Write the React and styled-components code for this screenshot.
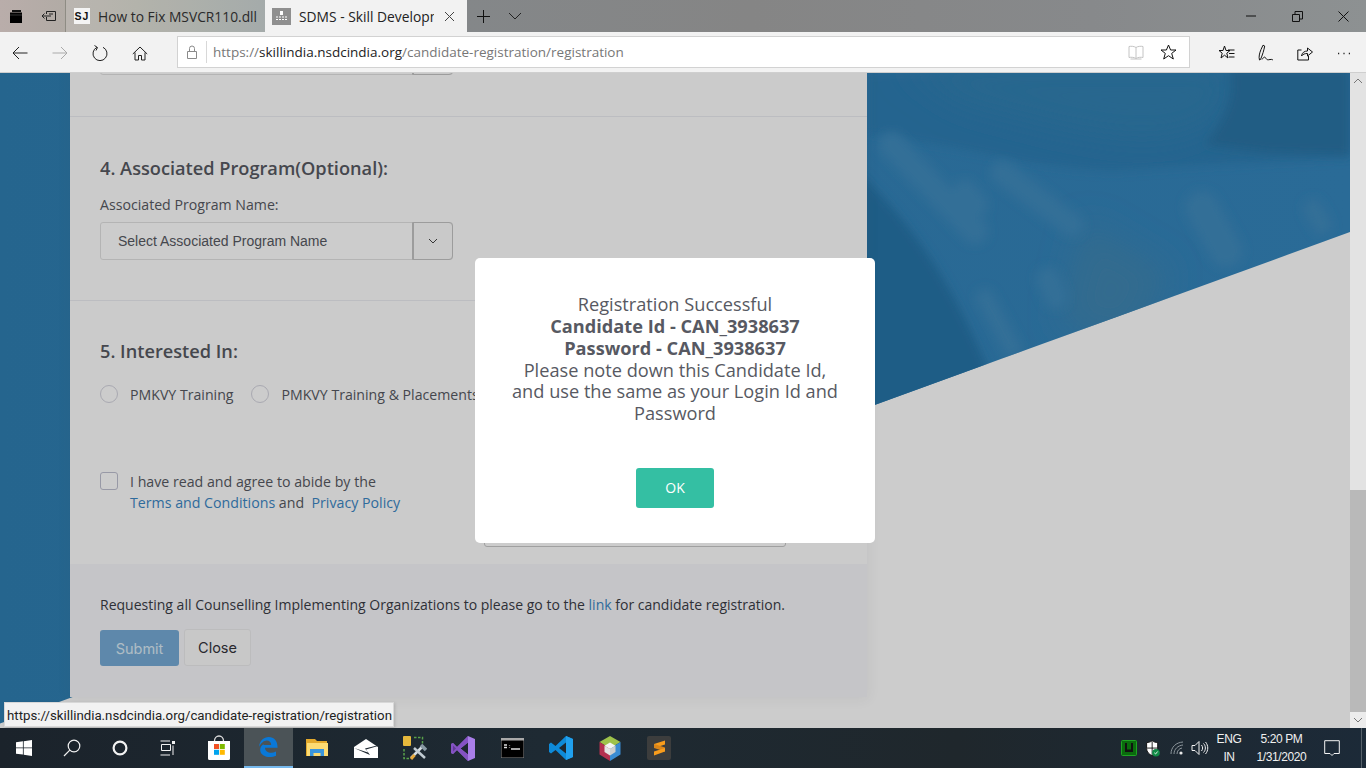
import React from 'react';
import styled, { createGlobalStyle } from 'styled-components';

const Global = createGlobalStyle`
  html, body { margin: 0; padding: 0; height: 100%; overflow: hidden; }
  #root { height: 100%; }
  * { box-sizing: border-box; }
`;

const Shell = styled.div`
  width: 1366px; height: 768px; display: flex; flex-direction: column;
  font-family: "Open Sans", "Noto Sans", sans-serif; overflow: hidden; position: relative;
`;

/* ---- tab strip ---- */
const TabStrip = styled.div`
  height: 32px; flex: none; display: flex; align-items: stretch;
  background: linear-gradient(90deg, #b9adaa 0%, #a9a9a0 10%, #979f9f 20%, #848789 34%, #858585 55%, #87898b 80%, #8d9192 100%);
`;
const StripIcon = styled.div`
  width: ${p => p.$w}px; flex: none; display: flex; align-items: center; justify-content: center;
`;
const Tab = styled.div`
  width: ${p => p.$w}px; flex: none; display: flex; align-items: center; padding-left: 8px;
  background: ${p => p.$active ? '#f2f2f2' : 'rgba(255,255,255,.12)'};
  border-left: ${p => p.$active ? 'none' : '1px solid #8e8c84'};
  color: ${p => p.$active ? '#222' : '#2a2a2a'};
  position: relative;
`;
const TabTitle = styled.span`
  font-size: 13.8px; white-space: nowrap; overflow: hidden; width: ${p => p.$w}px; margin-left: ${p => p.$ml}px;
  font-family: "Open Sans", sans-serif;
`;
const FaviconSJ = styled.span`
  width: 16px; height: 16px; background: #f4f4f4; color: #111; font: 700 10.5px/16px "Liberation Sans", sans-serif;
  text-align: center; letter-spacing: 1px; flex: none;
`;
const FaviconGrey = styled.span`
  width: 19px; height: 17px; margin-left: -1px; background: #8f8f8f; flex: none; display: flex; align-items: center; justify-content: center;
`;
const TabClose = styled.span`
  display: flex; margin-left: 10px;
`;
const StripActions = styled.div`
  display: flex; align-items: center; gap: 17px; padding-left: 9px; flex: 1;
`;
const WindowButtons = styled.div`
  margin-left: auto; display: flex; align-items: center;
`;
const WindowButton = styled.span`
  width: 46px; height: 32px; display: flex; align-items: center; justify-content: center;
`;

/* ---- toolbar ---- */
const Toolbar = styled.div`
  height: 41px; flex: none; background: #f2f2f2; border-bottom: 1px solid #cfcfcf; display: flex; align-items: center;
`;
const NavSlot = styled.span`
  width: 40px; flex: none; display: flex; align-items: center; justify-content: center;
`;
const NavGroup = styled.div`
  display: flex; width: 177px; padding-top: 2px;
`;
const AddressBar = styled.div`
  width: 1013px; height: 32px; background: #fff; border: 1px solid #d2d2d2; display: flex; align-items: center; flex: none; padding-right: 4px;
`;
const Lock = styled.span`
  width: 29px; flex: none; display: flex; justify-content: center; border-right: 1px solid #d8d8d8; height: 22px; align-items: center;
`;
const Url = styled.span`
  margin-left: 6px; font-size: 13.5px; color: #777; white-space: nowrap; flex: 1;
`;
const UrlHost = styled.span` color: #222; `;
const AddressIcon = styled.span`
  width: 33px; flex: none; display: flex; justify-content: center;
`;
const RightTools = styled.div`
  display: flex; padding-left: 17px; padding-top: 2px;
`;
const ToolSlot = styled.span`
  width: 39px; flex: none; display: flex; justify-content: center; align-items: center;
`;

/* ---- page ---- */
const Viewport = styled.div`
  flex: 1; display: flex; min-height: 0; position: relative;
`;
const PageArea = styled.div`
  width: 1350px; flex: none; position: relative; overflow: hidden; background: #fff;
`;
const Backdrop = styled.svg`
  position: absolute; left: 0; top: 0; width: 1350px; height: 655px;
`;
const Panel = styled.main`
  position: relative; margin-left: 70px; width: 797px; background: #fefefe; box-shadow: 0 1px 12px 1px rgba(69,65,78,.07);
`;
const SelectBox = styled.div`
  width: 353px; height: 38px; display: flex; border: 1px solid #e2e2e2; border-radius: 3px; background: #fff;
  margin-top: ${p => p.$mt || 0}px;
`;
const SelectText = styled.span`
  flex: 1; padding-left: 17px; font: 14px/37px "Liberation Sans", sans-serif; color: #575962;
`;
const SelectAddon = styled.span`
  width: 39px; border-left: 1px solid #c4c4c4; display: flex; align-items: center; justify-content: center;
  outline: 1px solid #c4c4c4; border-radius: 0 3px 3px 0; background: #fcfcfc;
`;
const Section = styled.section`
  padding: ${p => p.$pt}px 30px ${p => p.$pb}px;
  border-bottom: ${p => p.$rule ? '1px solid #ebedf2' : 'none'};
`;
const Heading = styled.h3`
  margin: 0; font-size: 18.2px; line-height: 24px; font-weight: 600; color: #575962;
`;
const FieldLabel = styled.div`
  margin: 15px 0 7px; font-size: 14.15px; line-height: 20px; color: #575962;
`;
const RadioRow = styled.div`
  display: flex; align-items: center; margin-top: 22px; height: 18px;
`;
const Radio = styled.span`
  width: 18px; height: 18px; border-radius: 50%; border: 1px solid #d4d4de; background: #fff; flex: none; margin-right: 12px;
`;
const RadioLabel = styled.span`
  font-size: 14.15px; color: #575962; margin-right: 18px; white-space: nowrap;
`;
const AgreeRow = styled.div`
  display: flex; align-items: flex-start;
`;
const AgreeLeft = styled.div`
  width: 384px; flex: none; display: flex; align-items: flex-start;
`;
const Check = styled.span`
  width: 18px; height: 18px; border-radius: 3px; border: 1px solid #bfc0d0; background: #fff; flex: none; margin-right: 12px;
`;
const AgreeText = styled.div`
  font-size: 14.2px; line-height: 21px; color: #575962; margin-top: -1px;
`;
const TermsLink = styled.a`
  color: #3b86c4; text-decoration: none;
`;
const HiddenField = styled.div`
  width: 302px; height: 37px; margin-top: 38px; border: 1px solid #c8c8c8; border-radius: 3px; background: #fff;
`;
const Footer = styled.footer`
  background: #f7f7fa; padding: 31px 30px 0; height: 133px;
`;
const FooterNote = styled.p`
  margin: 0; font-size: 14.02px; line-height: 20px; color: #3a3c46;
`;
const FooterLink = styled.a`
  color: #3b86c4; text-decoration: none;
`;
const FooterActions = styled.div`
  display: flex; gap: 5px; margin-top: 15px; align-items: flex-start;
`;
const SubmitBtn = styled.span`
  width: 79px; height: 36px; border-radius: 3px; background: #76abd6; color: #dcebf6; font: 400 14.5px/37px Inter, "Open Sans", sans-serif; text-align: center;
`;
const CloseBtn = styled.span`
  width: 67px; height: 37px; margin-top: -1px; border-radius: 3px; background: #fbfbfb; border: 1px solid #ebebed; color: #33333a; font: 400 14.5px/35px Inter, "Open Sans", sans-serif; text-align: center;
`;

/* ---- modal ---- */
const Overlay = styled.div`
  position: absolute; inset: 0; background: rgba(0,0,0,.2); display: flex; align-items: center; justify-content: center;
`;
const Dialog = styled.div`
  width: 400px; height: 285px; background: #fff; border-radius: 5px; padding: 36px 34px 0; text-align: center;
  color: #575962; font-size: 18.2px; line-height: 21.84px; display: flex; flex-direction: column; align-items: center;
`;
const DialogBody = styled.div`
  height: 131px;
`;
const OkButton = styled.span`
  margin-top: 43px; width: 78px; height: 40px; border-radius: 3px; background: #34bfa3; color: #fff; font-size: 14px; line-height: 40px;
`;

/* ---- tooltip ---- */
const Tooltip = styled.div`
  position: absolute; left: 4px; top: 629px; width: 390px; height: 25px; background: #f2f2f2; border: 1px solid #d8d8d8;
  font: 13.25px/25px Roboto, sans-serif; color: #222; padding-left: 2px; box-shadow: 1px 1px 3px rgba(0,0,0,.15); white-space: nowrap; overflow: hidden;
`;

/* ---- scrollbar ---- */
const ScrollBar = styled.div`
  width: 16px; flex: none; background: #e3e3e3; display: flex; flex-direction: column;
`;
const ScrollButton = styled.span`
  height: 16px; flex: none; background: ${p => p.$light ? '#ececec' : '#e3e3e3'}; display: flex; align-items: center; justify-content: center;
`;
const ScrollTrack = styled.span`
  height: 401px; flex: none;
`;
const ScrollThumb = styled.span`
  flex: 1; background: #b9b9b9;
`;

/* ---- taskbar ---- */
const Taskbar = styled.div`
  height: 40px; flex: none; display: flex; align-items: stretch; background: linear-gradient(90deg, #1b232b 0%, #1e2a33 40%, #1f272c 70%, #1c2a38 100%);
`;
const TaskSlot = styled.span`
  width: ${p => p.$w || 48.8}px; flex: none; display: flex; align-items: center; justify-content: center;
  ${p => p.$active ? 'background: #4b5357; border-bottom: 2px solid #76b9ed;' : ''}
`;
const Spacer = styled.span` width: 3px; flex: none; `;
const Tray = styled.div`
  margin-left: auto; display: flex; align-items: center; color: #fff;
`;
const TrayIcon = styled.span`
  width: ${p => p.$w}px; flex: none; display: flex; justify-content: center;
`;
const TrayText = styled.span`
  width: ${p => p.$w}px; flex: none; text-align: center; font: 12px/18px "Liberation Sans", sans-serif; letter-spacing: -.4px; color: #f0f0f0;
`;
const TrayEnd = styled.span`
  width: 5px; height: 40px; margin-left: 14px; border-left: 1px solid #56616a; flex: none;
`;

const Stroke = ({ w = 16, h = 16, vb, color = '#111', sw = 1, children }) => (
  <svg width={w} height={h} viewBox={vb || `0 0 ${w} ${h}`} fill="none" stroke={color} strokeWidth={sw}>{children}</svg>
);

function BlueBackdrop() {
  return (
    <Backdrop viewBox="0 0 1350 655" aria-hidden="true">
      <defs>
        <clipPath id="cut"><polygon points="0,0 1350,0 1350,159 0,650.5" /></clipPath>
        <filter id="soft" x="-40%" y="-40%" width="180%" height="180%"><feGaussianBlur stdDeviation="5" /></filter>
        <filter id="softer" x="-30%" y="-30%" width="160%" height="160%"><feGaussianBlur stdDeviation="16" /></filter>
        <linearGradient id="baseBlue" x1="0" y1="0" x2="1" y2="0">
          <stop offset="0" stopColor="#2f7fb2" />
          <stop offset="0.6" stopColor="#3484ba" />
          <stop offset="1" stopColor="#3586bd" />
        </linearGradient>
      </defs>
      <g clipPath="url(#cut)">
        <rect width="1350" height="655" fill="url(#baseBlue)" />
        <path d="M867 0H1350V85L1210 92 L1120 98 C1060 100 990 80 867 60Z" fill="#2f7eb3" filter="url(#soft)" />
        <path d="M900 -10H1230C1240 25 1225 45 1190 60 C1130 80 1040 50 960 30Z" fill="#3381b2" filter="url(#softer)" />
        <path d="M1230 -5H1350V82L1270 80 L1205 72 C1225 45 1235 25 1230 -5Z" fill="#2b75a6" filter="url(#soft)" />
        <path d="M860 100C920 160 960 220 1003 335 L860 420Z" fill="#2874a8" filter="url(#soft)" />
        <path d="M1085 150 L1170 200 L1130 270 L1060 250Z" fill="#3f86b2" filter="url(#softer)" />
        <g stroke="#3f8bbd" strokeLinecap="round" fill="none" filter="url(#soft)">
          <path d="M892 72 L975 158" strokeWidth="26" />
          <path d="M1003 100 L1072 152" strokeWidth="24" />
          <path d="M965 120 L975 132" strokeWidth="26" />
          <path d="M1202 135 L1226 178" strokeWidth="34" />
          <path d="M1313 136 L1322 152" strokeWidth="20" />
          <path d="M1048 206 L1056 224" strokeWidth="24" />
          <path d="M985 225 L1012 275" strokeWidth="18" />
        </g>
      </g>
    </Backdrop>
  );
}

const WinLogo = () => (
  <svg width="16" height="16" viewBox="0 0 16 16" fill="#fff"><path d="M0 2.3 6.9 1.3V7.5H0ZM7.700 1.200 16 0V7.500H7.700ZM0 8.300H6.900V14.600L0 13.700ZM7.700 8.300H16V16L7.700 14.800Z" /></svg>
);
const EdgeLogo = () => (
  <svg width="20" height="22" viewBox="0 0 20 22"><path fill="#0a78d7" d="M1 11C1.500 4.500 6 1 10.700 1 16 1 19.600 4.700 19.600 11.800H7C7.300 16.500 13 18.300 18 15.500V19.800C12 22.500 2.500 21 2.200 14 2.100 11.700 3.500 9.500 5.500 8.300 5.600 9 5.400 9 7 9H13.200C13.200 6.200 11.200 4.600 8.800 4.600 5.600 4.600 2.800 7.500 1 11Z" /></svg>
);

export default function App() {
  return (
    <Shell>
      <Global />
      <TabStrip>
        <StripIcon $w={32}>
          <svg width="14" height="15" viewBox="0 0 14 15"><path d="M3 1H12V3H3Z" fill="#111"/><path d="M1 3.500H13V14H1Z" fill="#000"/><path d="M1 6H13" stroke="#555" strokeWidth=".6"/></svg>
        </StripIcon>
        <StripIcon $w={33}>
          <Stroke w={16} h={14} color="#222"><path d="M5.500 2.500H14.500V11.500H5.500V8M1 7H10M3.500 4.500 1 7 3.500 9.500M5.500 2.500V5M8 5H12" /></Stroke>
        </StripIcon>
        <Tab $w={200}>
          <FaviconSJ>SJ</FaviconSJ>
          <TabTitle $w={165} $ml={8}>How to Fix MSVCR110.dll</TabTitle>
        </Tab>
        <Tab $w={202} $active>
          <FaviconGrey>
            <svg width="13" height="12" viewBox="0 0 13 12"><path d="M5 1H8V5H5Z" fill="#fff"/><path d="M1 7H12M1 9.500H12" stroke="#fff" strokeWidth="1.200" strokeDasharray="2 1"/></svg>
          </FaviconGrey>
          <TabTitle $w={135} $ml={8}>SDMS - Skill Development</TabTitle>
          <TabClose><Stroke w={11} h={11} color="#444"><path d="M1 1 10 10M10 1 1 10" /></Stroke></TabClose>
        </Tab>
        <StripActions>
          <Stroke w={15} h={15} color="#111"><path d="M7.500 1V14M1 7.500H14" /></Stroke>
          <Stroke w={14} h={8} color="#222"><path d="M1 1 7 7 13 1" /></Stroke>
        </StripActions>
        <WindowButtons>
          <WindowButton><Stroke w={10} h={2} color="#111"><path d="M0 1H10" /></Stroke></WindowButton>
          <WindowButton><Stroke w={11} h={11} color="#111"><path d="M.5 3.500H7.500V10.500H.5ZM3 3.500V.5H10.500V8H7.500" /></Stroke></WindowButton>
          <WindowButton><Stroke w={11} h={11} color="#111"><path d="M.5.5 10.500 10.500M10.500.5.5 10.500" /></Stroke></WindowButton>
        </WindowButtons>
      </TabStrip>

      <Toolbar>
        <NavGroup>
          <NavSlot><Stroke w={16} h={14} color="#222"><path d="M15.500 7H1M7 1 1 7 7 13" /></Stroke></NavSlot>
          <NavSlot><Stroke w={16} h={14} color="#aaa"><path d="M.5 7H15M9 1 15 7 9 13" /></Stroke></NavSlot>
          <NavSlot><Stroke w={16} h={17} color="#222"><path d="M5 2.300A7 7 0 1 0 11 2.300M2.500.5 5.500 2.500 4 5.500" /></Stroke></NavSlot>
          <NavSlot><Stroke w={16} h={15} color="#222"><path d="M.8 8 8 1 15.200 8M3 6.500V14H6.500V9.500H9.500V14H13V6.500" /></Stroke></NavSlot>
        </NavGroup>
        <AddressBar>
          <Lock><Stroke w={10} h={14} color="#8a8a8a"><path d="M.5 6.500H9.500V13.500H.5ZM2.500 6.500V3.500A2.500 2.500 0 0 1 7.500 3.500V6.500" /></Stroke></Lock>
          <Url>https://<UrlHost>skillindia.nsdcindia.org</UrlHost>/candidate-registration/registration</Url>
          <AddressIcon><Stroke w={16} h={15} color="#c4c4c4"><path d="M8 2.500C6.500 1.300 3 1 1 1.500V12.500C3 12 6.500 12.300 8 13.500 9.500 12.300 13 12 15 12.500V1.500C13 1 9.500 1.300 8 2.500ZM8 2.500V13.500M2.500 14H13.500" /></Stroke></AddressIcon>
          <AddressIcon><Stroke w={17} h={16} color="#111"><path d="M8.500 1 10.600 6H16L11.700 9.400 13.300 15 8.500 11.700 3.700 15 5.300 9.400 1 6H6.400Z" /></Stroke></AddressIcon>
        </AddressBar>
        <RightTools>
          <ToolSlot><Stroke w={17} h={16} color="#111"><path d="M6.500 1 8 5.500H12L8.800 8.200 10 13 6.500 10.200 3 13 4.200 8.200 1 5.500H5ZM10 5H16.500M11 8.500H16.500M11 12H16.500" /></Stroke></ToolSlot>
          <ToolSlot><Stroke w={17} h={18} color="#111"><path d="M2.500 16C1.500 13 2.500 9 4 5.500L6 1.200 7.700 2C7 6 5.500 11 3.500 15.500ZM5 15.500C7 12.500 8 12.500 9 14.500 10 16 11 16 13 15.500 14.500 15.200 15 15.500 16 16" /></Stroke></ToolSlot>
          <ToolSlot><Stroke w={16} h={16} color="#111"><path d="M4.500 5H.8V15H11.500V11" /><path d="M4.500 11C5 7.500 7.500 6 10.500 6V3L15.500 7 10.500 11V8.500C8 8.500 6 9 4.500 11Z" /></Stroke></ToolSlot>
          <ToolSlot><Stroke w={14} h={3} color="#222"><path d="M1 1.500H2.200M6.400 1.500H7.600M11.800 1.500H13" strokeWidth="1.600" /></Stroke></ToolSlot>
        </RightTools>
      </Toolbar>

      <Viewport>
        <PageArea>
          <BlueBackdrop />
          <Panel>
            <Section $pt={0} $pb={41} $rule>
              <SelectBox $mt={-36}>
                <SelectText />
                <SelectAddon />
              </SelectBox>
            </Section>
            <Section $pt={39} $pb={40} $rule>
              <Heading>4. Associated Program(Optional):</Heading>
              <FieldLabel>Associated Program Name:</FieldLabel>
              <SelectBox>
                <SelectText>Select Associated Program Name</SelectText>
                <SelectAddon>
                  <Stroke w={10} h={6} color="#444"><path d="M1 1 5 5 9 1" /></Stroke>
                </SelectAddon>
              </SelectBox>
            </Section>
            <Section $pt={38} $pb={69}>
              <Heading>5. Interested In:</Heading>
              <RadioRow>
                <Radio /><RadioLabel>PMKVY Training</RadioLabel>
                <Radio /><RadioLabel>PMKVY Training &amp; Placements</RadioLabel>
              </RadioRow>
            </Section>
            <Section $pt={0} $pb={17}>
              <AgreeRow>
                <AgreeLeft>
                  <Check />
                  <AgreeText>
                    I have read and agree to abide by the<br />
                    <TermsLink href="#">Terms and Conditions</TermsLink> and&nbsp; <TermsLink href="#">Privacy Policy</TermsLink>
                  </AgreeText>
                </AgreeLeft>
                <HiddenField />
              </AgreeRow>
            </Section>
            <Footer>
              <FooterNote>Requesting all Counselling Implementing Organizations to please go to the <FooterLink href="#">link</FooterLink> for candidate registration.</FooterNote>
              <FooterActions>
                <SubmitBtn>Submit</SubmitBtn>
                <CloseBtn>Close</CloseBtn>
              </FooterActions>
            </Footer>
          </Panel>
          <Overlay>
            <Dialog>
              <DialogBody>
                Registration Successful<br />
                <strong>Candidate Id - CAN_3938637</strong><br />
                <strong>Password - CAN_3938637</strong><br />
                Please note down this Candidate Id, and use the same as your Login Id and Password
              </DialogBody>
              <OkButton>OK</OkButton>
            </Dialog>
          </Overlay>
          <Tooltip>https://skillindia.nsdcindia.org/candidate-registration/registration</Tooltip>
        </PageArea>
        <ScrollBar>
          <ScrollButton><Stroke w={10} h={6} color="#777"><path d="M1 5 5 1 9 5" /></Stroke></ScrollButton>
          <ScrollTrack />
          <ScrollThumb />
          <ScrollButton $light><Stroke w={10} h={6} color="#777"><path d="M1 1 5 5 9 1" /></Stroke></ScrollButton>
        </ScrollBar>
      </Viewport>

      <Taskbar>
        <TaskSlot $w={48}><WinLogo /></TaskSlot>
        <TaskSlot $w={48}><Stroke w={18} h={18} color="#f2f2f2" sw={1.2}><circle cx="11" cy="7" r="5.800" /><path d="M6.800 11.200 1 17" /></Stroke></TaskSlot>
        <TaskSlot $w={48}><Stroke w={16} h={16} color="#f2f2f2" sw={2.2}><circle cx="8" cy="8" r="6.400" /></Stroke></TaskSlot>
        <TaskSlot $w={48}>
          <svg width="16" height="16" viewBox="0 0 16 16" fill="none" stroke="#f2f2f2"><path d="M.5 1H10M1.500 4.500H10.500V10.500H1.500ZM.5 15H10" /><path d="M13 5.500V15" /><rect x="12" y="1" width="3" height="3" fill="#f2f2f2" stroke="none" /></svg>
        </TaskSlot>
        <Spacer />
        <TaskSlot>
          <svg width="24" height="26" viewBox="0 0 24 26">
            <path d="M7.500 6C7.500 3 9.500 1 12 1S16.500 3 16.500 6" fill="none" stroke="#ddd" strokeWidth="1.300" />
            <path d="M1 6H23V23.500A1.500 1.500 0 0 1 21.500 25H2.500A1.500 1.500 0 0 1 1 23.500Z" fill="#fff" />
            <rect x="7" y="9" width="5" height="5" fill="#f25022" /><rect x="12.800" y="9" width="5" height="5" fill="#7fba00" />
            <rect x="7" y="14.800" width="5" height="5" fill="#00a4ef" /><rect x="12.800" y="14.800" width="5" height="5" fill="#ffb900" />
          </svg>
        </TaskSlot>
        <TaskSlot $active><EdgeLogo /></TaskSlot>
        <TaskSlot>
          <svg width="22" height="20" viewBox="0 0 22 20">
            <path d="M0 1H9L11 3H21V18H0Z" fill="#e3a92c" /><path d="M1 5H22V18H1Z" fill="#fcdb73" />
            <path d="M4 18V11H18V18H14.500V15H7.500V18Z" fill="#3a95dc" />
          </svg>
        </TaskSlot>
        <TaskSlot>
          <svg width="24" height="19" viewBox="0 0 24 19">
            <path d="M0 8 12 0 24 8V19H0Z" fill="#fff" />
            <path d="M0 9 16 16 12 10.500 24 7 23 6.500 11 9.500 14 13.500Z" fill="#1d2730" />
          </svg>
        </TaskSlot>
        <TaskSlot>
          <svg width="24" height="24" viewBox="0 0 24 24">
            <rect x="0" y="0" width="8" height="10" rx="1" fill="#e7b93c" />
            <path d="M11 1.500H19.500V9M1 13V22.500H7" fill="none" stroke="#58a14a" strokeWidth="1.500" strokeDasharray="2.500 1.500" />
            <path d="M8 22 19 11" stroke="#d6dde2" strokeWidth="2.500" />
            <path d="M22 22 11 12" stroke="#c2ccd3" strokeWidth="2.500" />
            <path d="M8 23 11.500 19" stroke="#e7a93c" strokeWidth="3" />
            <path d="M18 9 23 14" stroke="#8a9aa5" strokeWidth="3.500" />
          </svg>
        </TaskSlot>
        <TaskSlot>
          <svg width="24" height="25" viewBox="0 0 24 25">
            <path d="M17 0 24 3V22L17 25 6 14 2 18 0 17V8L2 7 6 11Z" fill="#a97ee8" />
            <path d="M17 6.500V18.500L9.500 12.500Z" fill="#1d2730" />
            <path d="M2 9.500 5 12.500 2 15.500Z" fill="#1d2730" />
            <path d="M17 0 6 11 2 7 0 8V17L2 18 6 14 17 25V18.500L9.500 12.500 17 6.500Z" fill="#7a44b8" opacity=".75" />
          </svg>
        </TaskSlot>
        <TaskSlot>
          <svg width="23" height="20" viewBox="0 0 23 20" aria-hidden="true">
            <rect width="23" height="20" fill="#000" stroke="#8a8a8a" />
            <rect width="23" height="2.500" fill="#a9a9a9" />
            <path d="M3 7H6M3 9.500H6M8.500 7V7.500M8.500 9.500V10M10 11H19" stroke="#ddd" strokeWidth="1.300" />
          </svg>
        </TaskSlot>
        <TaskSlot>
          <svg width="24" height="24" viewBox="0 0 24 24">
            <path d="M17 0 24 3V21L17 24 6.500 14 2 17.500 0 16V8L2 6.500 6.500 10Z" fill="#0e8ad8" />
            <path d="M17 6.500V17.500L10 12Z" fill="#1d2730" />
            <path d="M17 0 24 3V21L17 24Z" fill="#20a0ee" />
          </svg>
        </TaskSlot>
        <TaskSlot>
          <svg width="22" height="25" viewBox="0 0 22 25">
            <path d="M11 0 21.500 6 11 12.500 .5 6Z" fill="#9ec24b" />
            <path d="M.5 6V18.500L11 25V12.500Z" fill="#b4304f" />
            <path d="M21.500 6V18.500L11 25V12.500Z" fill="#3a8cd2" />
            <path d="M11 6.500 16.500 9.800 11 13 5.500 9.800Z" fill="#f4f4f4" />
            <path d="M5.500 9.800V16L11 19.500V13Z" fill="#e4e4e4" />
            <path d="M16.500 9.800V16L11 19.500V13Z" fill="#cfcfcf" />
          </svg>
        </TaskSlot>
        <TaskSlot>
          <svg width="24" height="24" viewBox="0 0 24 24">
            <rect width="24" height="24" rx="2" fill="#3c3d3d" />
            <path d="M7 8 18 4.500V8.500L7 12Z" fill="#f89c1c" />
            <path d="M7 8 18 11.500V15.500L7 12Z" fill="#d9851a" />
            <path d="M7 15.500 18 12V15.500L7 19.500Z" fill="#f89c1c" />
          </svg>
        </TaskSlot>
        <Tray>
          <TrayIcon $w={24}>
            <svg width="16" height="16" viewBox="0 0 16 16"><rect x=".5" y=".5" width="15" height="15" rx="1" fill="#0a6b0d" stroke="#1fa323" /><path d="M4 3V12H12V3H10V9.500H6V3Z" fill="#111" /></svg>
          </TrayIcon>
          <TrayIcon $w={24}>
            <svg width="16" height="17" viewBox="0 0 17 20"><path d="M7.500 1C10 2.500 11.500 3 14 3V10C14 14 11 17 7.500 18.500 4 17 1 14 1 10V3C3.500 3 5 2.500 7.500 1Z" fill="#fff" stroke="#000"/><path d="M7.500 2V18M1.500 9.500H14" stroke="#000"/><circle cx="12" cy="15" r="4.500" fill="#108a46" /><path d="M10 15 11.500 16.500 14 13.500" fill="none" stroke="#fff" /></svg>
          </TrayIcon>
          <TrayIcon $w={24}>
            <Stroke w={14} h={14} color="#8c959b"><path d="M1 13C1 6 6 1.500 13 1M4 13C4 8 8 4.500 13 4M7 13C7 10 9 7.500 12 7" /><circle cx="11" cy="12" r="1.600" fill="#e8e8e8" stroke="none" /></Stroke>
          </TrayIcon>
          <TrayIcon $w={22}>
            <Stroke w={18} h={16} color="#f2f2f2"><path d="M1 5.500H4L8 1.500V14.500L4 10.500H1ZM10.500 5C12 7 12 9 10.500 11M12.500 3.500C15 6 15 10 12.500 12.500M14.500 2C17.500 5.500 17.500 10.500 14.500 14" /></Stroke>
          </TrayIcon>
          <TrayText $w={36}>ENG<br />IN</TrayText>
          <TrayText $w={69}>5:20 PM<br />1/31/2020</TrayText>
          <TrayIcon $w={31}>
            <Stroke w={16} h={17} color="#f2f2f2"><path d="M.7.7H15.300V13.500H10L8 15.500 6 13.500H.7Z" /></Stroke>
          </TrayIcon>
          <TrayEnd />
        </Tray>
      </Taskbar>
    </Shell>
  );
}
